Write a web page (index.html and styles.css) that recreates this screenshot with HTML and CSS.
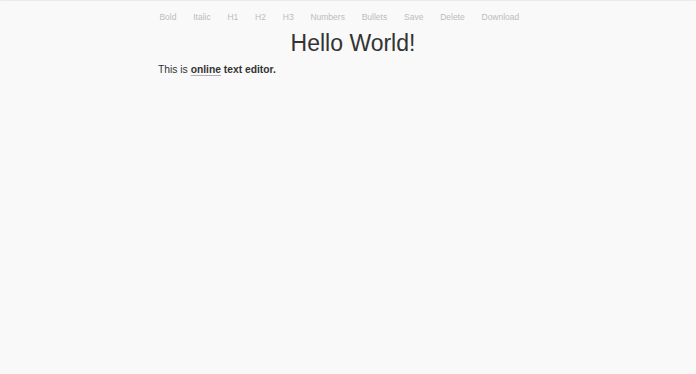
FILE: index.html
```html
<!DOCTYPE html>
<html lang="en">
    <head>
        <meta charset="UTF-8">
        <title>Online Text Editor</title>
        <link rel="stylesheet" href="styles.css">
    </head>

    <body>
        <div class="wrap">
            <div class="toolbar">
                <button type="button">Bold</button>
                <button type="button">Italic</button>
                <button type="button">H1</button>
                <button type="button">H2</button>
                <button type="button">H3</button>
                <button type="button">Numbers</button>
                <button type="button">Bullets</button>
                <button type="button">Save</button>
                <button type="button">Delete</button>
                <button type="button">Download</button>
            </div>

            <div class="editor" contenteditable="true">
                <h1>Hello World!</h1>
                <p>This is <b><u>online</u> text editor.</b></p>
            </div>
        </div>
    </body>
</html>
```

FILE: styles.css
```css
html {
    background-color: #f9f9f9;
}

body {
    margin: 0;
    padding-left: 12px;
    min-height: 374px;
    box-shadow: inset 0 1px 1px rgba(0,0,0,0.06);
    font-family: "Liberation Sans", Arial, sans-serif;
    display: flex;
    justify-content: center;
}

.wrap {
    width: 404px;
}

.toolbar {
    display: flex;
    padding-top: 11px;
    margin-left: -1px;
}

.toolbar button {
    background: none;
    border: none;
    color: #bcbcbc;
    font-family: inherit;
    font-size: 8.5px;
    line-height: 12px;
    padding: 0 8.4px;
    margin: 0;
    cursor: pointer;
}

.editor {
    outline: none;
    padding: 0 6px;
}

h1 {
    color: #333;
    font-size: 23px;
    font-weight: normal;
    text-align: center;
    line-height: 26px;
    margin: 7px 2px 0 0;
}

p {
    color: #333;
    font-size: 10.3px;
    line-height: 12px;
    margin: 8px 0 0;
}

u {
    text-decoration-color: #b9a9b9;
    text-decoration-thickness: 1px;
    text-underline-offset: 2px;
}
```
